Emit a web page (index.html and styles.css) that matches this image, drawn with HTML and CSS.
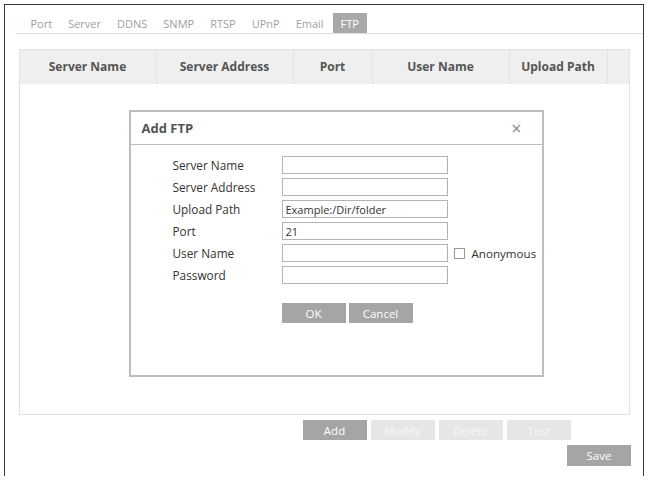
FILE: index.html
```html
<!DOCTYPE html>
<html lang="en">
<head>
    <meta charset="UTF-8">
    <title>FTP</title>
    <link rel="stylesheet" href="styles.css">
</head>
<body>
    <div class="frame">
        <div class="tabs">
            <span class="tab">Port</span>
            <span class="tab">Server</span>
            <span class="tab">DDNS</span>
            <span class="tab">SNMP</span>
            <span class="tab">RTSP</span>
            <span class="tab">UPnP</span>
            <span class="tab">Email</span>
            <span class="tab active">FTP</span>
        </div>

        <div class="table">
            <div class="thead">
                <div class="th c1">Server Name</div>
                <div class="th c2">Server Address</div>
                <div class="th c3">Port</div>
                <div class="th c4">User Name</div>
                <div class="th c5">Upload Path</div>
                <div class="th c6"></div>
            </div>

            <!-- Add FTP dialog -->
            <div class="dialog">
                <div class="dialog-head">
                    <span class="dialog-title">Add FTP</span>
                    <span class="close">&#215;</span>
                </div>
                <div class="form">
                    <div class="row"><label>Server Name</label><input type="text"></div>
                    <div class="row"><label>Server Address</label><input type="text"></div>
                    <div class="row"><label>Upload Path</label><input type="text" value="Example:/Dir/folder"></div>
                    <div class="row"><label>Port</label><input type="text" value="21"></div>
                    <div class="row">
                        <label>User Name</label><input type="text">
                        <span class="check"><span class="box"></span>Anonymous</span>
                    </div>
                    <div class="row"><label>Password</label><input type="password"></div>
                    <div class="dialog-buttons">
                        <button class="btn">OK</button>
                        <button class="btn">Cancel</button>
                    </div>
                </div>
            </div>
        </div>

        <div class="actions">
            <button class="btn">Add</button>
            <button class="btn off">Modify</button>
            <button class="btn off">Delete</button>
            <button class="btn off">Test</button>
        </div>
        <div class="save-row">
            <button class="btn save">Save</button>
        </div>
    </div>
</body>
</html>
```

FILE: styles.css
```css
body {
    margin: 0;
    font-family: "Open Sans", "Noto Sans", sans-serif;
    background-color: #fff;
    color: #333;
}

.frame {
    margin: 4px 0 0 4px;
    width: 640px;
    height: 472px;
    box-sizing: border-box;
    border: 1.5px solid #3a3a3a;
    border-bottom: none;
    padding: 8px 0 0 10.5px;
}

.tabs {
    display: flex;
    height: 20px;
    padding-left: 7px;
    border-bottom: 1.5px solid #dcdcdc;
}

.tab {
    padding: 0 8px;
    font-size: 11px;
    line-height: 21px;
    color: #a0a0a0;
}

.tab.active {
    background-color: #a9a9a9;
    color: #fff;
    margin-left: 1px;
}

.table {
    position: relative;
    margin: 15px 0 0 3px;
    width: 611px;
    height: 366px;
    box-sizing: border-box;
    border: 1.5px solid #e2e2e2;
}

.thead {
    display: flex;
    height: 34px;
    background-color: #efefef;
}

.th {
    box-sizing: border-box;
    border-right: 1.5px solid #e2e2e2;
    font-size: 12px;
    font-weight: bold;
    color: #555;
    text-align: center;
    line-height: 34px;
}

.c1 { width: 137px; }
.c2 { width: 137px; }
.c3 { width: 79px; }
.c4 { width: 137px; }
.c5 { width: 98px; }
.c6 { flex: 1; border-right: none; }

.dialog {
    position: absolute;
    top: 60px;
    left: 109px;
    width: 415px;
    height: 267px;
    box-sizing: border-box;
    background-color: #fff;
    border: 2px solid #bdbdbd;
}

.dialog-head {
    display: flex;
    justify-content: space-between;
    align-items: center;
    height: 32px;
    padding: 0 20px 0 11px;
    border-bottom: 1.5px solid #bdbdbd;
}

.dialog-title {
    font-size: 13px;
    font-weight: bold;
    color: #555;
}

.close {
    font-size: 18px;
    color: #8a8a8a;
}

.form {
    padding: 11px 0 0 42px;
}

.row {
    display: flex;
    align-items: center;
    height: 18px;
    margin-bottom: 4px;
}

.row label {
    width: 109px;
    font-size: 11.8px;
    color: #333;
}

.row input {
    width: 166px;
    height: 18px;
    box-sizing: border-box;
    margin: 0;
    padding: 0 3px;
    border: 1px solid #b4b4b4;
    font-family: "Open Sans", "Noto Sans", sans-serif;
    font-size: 11px;
    color: #333;
}

.check {
    display: flex;
    align-items: center;
    margin-left: 6px;
    font-size: 11.6px;
    color: #333;
}

.check .box {
    width: 9px;
    height: 9px;
    border: 1px solid #999;
    margin-right: 7px;
}

.dialog-buttons {
    display: flex;
    gap: 3px;
    margin: 19px 0 0 109px;
}

.btn {
    width: 64px;
    height: 20px;
    margin: 0;
    padding: 0;
    border: none;
    background-color: #a5a5a5;
    color: #fff;
    font-family: "Open Sans", "Noto Sans", sans-serif;
    font-size: 11.5px;
}

.btn.off {
    background-color: #e6e6e6;
    color: #f7f7f7;
}

.actions {
    display: flex;
    gap: 4px;
    margin: 5px 0 0 287px;
}

.save-row {
    display: flex;
    justify-content: flex-end;
    margin: 5px 12px 0 0;
}

.btn.save {
    height: 21px;
}
```
